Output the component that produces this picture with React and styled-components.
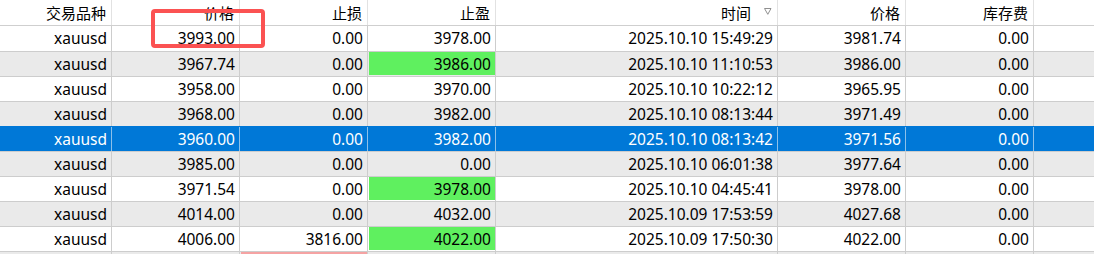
import React from "react";
import styled, { createGlobalStyle } from "styled-components";

const Global = createGlobalStyle`
  html, body { margin: 0; padding: 0; background: #fff; overflow: hidden; }
  body { font-family: "Noto Sans", "Noto Sans CJK SC", sans-serif; }
`;

const COLS = [112, 128, 128, 128, 282, 128, 128];

const Page = styled.div`
  position: relative;
  width: 1094px;
  height: 254px;
  overflow: hidden;
  font-family: "Noto Sans", "Noto Sans CJK SC", sans-serif;
  font-size: 15.5px;
  color: #000;
`;

const HeaderRow = styled.div`
  display: flex;
  height: 26px;
  box-sizing: border-box;
  border-bottom: 1px solid #cfcfcf;
  background: #fff;
`;

const HeaderCell = styled.div`
  box-sizing: border-box;
  flex: ${(p) => (p.$w ? `0 0 ${p.$w}px` : "1 1 auto")};
  display: flex;
  align-items: center;
  justify-content: flex-end;
  padding: 0 5px 1px 0;
  border-right: ${(p) => (p.$w ? "1px solid #e2e2e2" : "none")};
  font-family: "Noto Sans CJK SC", sans-serif;
  font-size: 15px;
  white-space: nowrap;
`;

const SortMark = styled.svg`
  width: 8px;
  height: 7px;
  margin-left: 13px;
  margin-right: 0;
  margin-top: -2px;
`;

const Row = styled.div`
  display: flex;
  height: 25px;
  box-sizing: border-box;
  border-top: ${(p) => (p.$first ? "none" : "1px solid #cdcdcd")};
  background: ${(p) => (p.$selected ? "#0078d7" : p.$alt ? "#eaeaea" : "#ffffff")};
  color: ${(p) => (p.$selected ? "#ffffff" : "#000")};
  border-top-color: ${(p) => (p.$selected ? "#0078d7" : "#cdcdcd")};
`;

const Cell = styled.div`
  box-sizing: border-box;
  flex: ${(p) => (p.$w ? `0 0 ${p.$w}px` : "1 1 auto")};
  display: flex;
  align-items: stretch;
  justify-content: flex-end;
  border-right: ${(p) =>
    p.$w ? (p.$selected ? "1px solid #8cc0ea" : "1px solid #cdcdcd") : "none"};
  white-space: nowrap;
`;

const CellInner = styled.div`
  flex: 1;
  display: flex;
  align-items: center;
  justify-content: flex-end;
  padding-right: 4px;
  margin: 0 0 1px 1px;
  background: ${(p) =>
    p.$hl === "green" ? "#5ff05f" : p.$hl === "pink" ? "#f5a3a3" : "transparent"};
`;

const Annotation = styled.div`
  position: absolute;
  left: 151px;
  top: 9px;
  width: 114px;
  height: 39px;
  box-sizing: border-box;
  border: 4px solid #fb5252;
  border-radius: 4px;
  pointer-events: none;
`;

const headers = ["交易品种", "价格", "止损", "止盈", "时间", "价格", "库存费"];

const rows = [
  ["xauusd", "3993.00", "0.00", "3978.00", "2025.10.10 15:49:29", "3981.74", "0.00"],
  ["xauusd", "3967.74", "0.00", "3986.00", "2025.10.10 11:10:53", "3986.00", "0.00"],
  ["xauusd", "3958.00", "0.00", "3970.00", "2025.10.10 10:22:12", "3965.95", "0.00"],
  ["xauusd", "3968.00", "0.00", "3982.00", "2025.10.10 08:13:44", "3971.49", "0.00"],
  ["xauusd", "3960.00", "0.00", "3982.00", "2025.10.10 08:13:42", "3971.56", "0.00"],
  ["xauusd", "3985.00", "0.00", "0.00", "2025.10.10 06:01:38", "3977.64", "0.00"],
  ["xauusd", "3971.54", "0.00", "3978.00", "2025.10.10 04:45:41", "3978.00", "0.00"],
  ["xauusd", "4014.00", "0.00", "4032.00", "2025.10.09 17:53:59", "4027.68", "0.00"],
  ["xauusd", "4006.00", "3816.00", "4022.00", "2025.10.09 17:50:30", "4022.00", "0.00"],
  ["", "", "", "", "", "", ""],
];

const highlights = {
  "1-3": "green",
  "6-3": "green",
  "8-3": "green",
  "9-2": "pink",
};

const SELECTED = 4;

export default function App() {
  return (
    <>
      <Global />
      <Page>
        <HeaderRow>
          {headers.map((h, i) => (
            <HeaderCell key={i} $w={COLS[i]}>
              {h}
              {i === 4 && (
                <SortMark viewBox="0 0 8 7">
                  <path d="M0.5 0.5 H7 L3.8 6.3 Z" fill="none" stroke="#8f8f8f" strokeWidth="1" />
                </SortMark>
              )}
            </HeaderCell>
          ))}
          <HeaderCell />
        </HeaderRow>
        {rows.map((r, ri) => {
          const sel = ri === SELECTED;
          return (
            <Row key={ri} $first={ri === 0} $alt={ri % 2 === 1} $selected={sel}>
              {r.map((v, ci) => (
                <Cell key={ci} $w={COLS[ci]} $selected={sel}>
                  <CellInner $hl={highlights[`${ri}-${ci}`]}>{v}</CellInner>
                </Cell>
              ))}
              <Cell />
            </Row>
          );
        })}
        <Annotation />
      </Page>
    </>
  );
}
